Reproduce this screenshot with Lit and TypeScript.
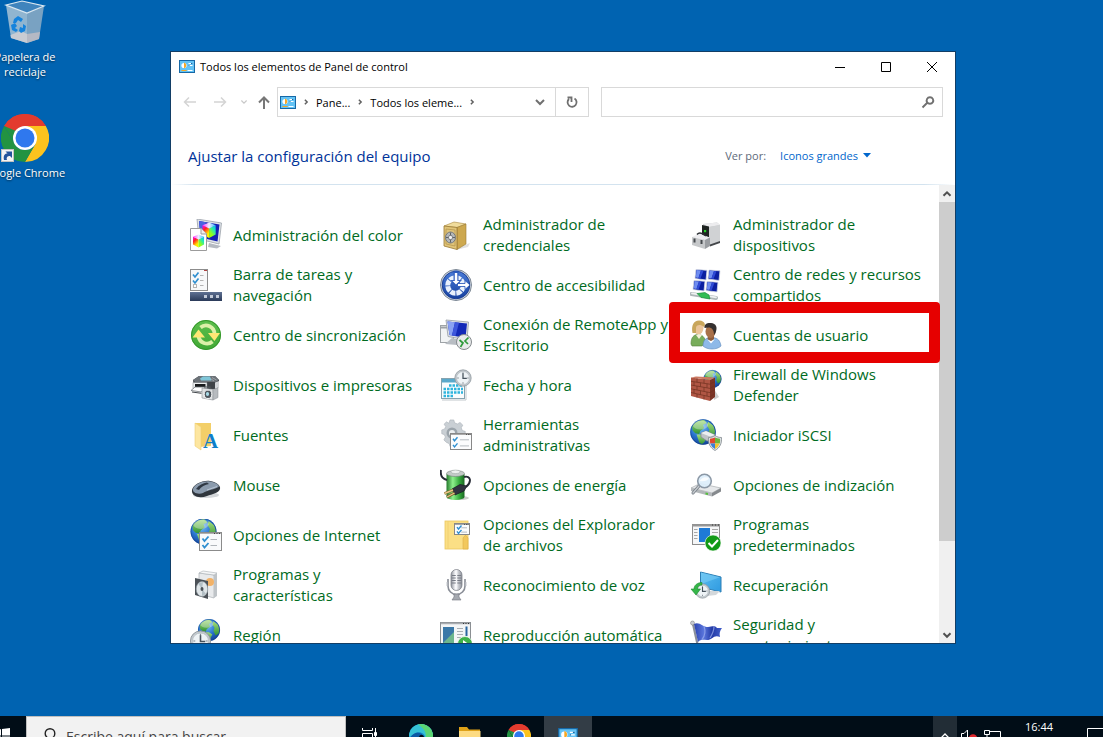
import { LitElement, html, svg, css, nothing } from "lit";
import { customElement, property } from "lit/decorators.js";

/* ---------- shared icon fragments ---------- */

const globe = (cx: number, cy: number, r: number) => svg`
  <g transform="translate(${cx} ${cy}) scale(${r / 10})">
    <circle r="10" fill="url(#sea)" />
    <path d="M-8.500-4C-7-8-2-9.600 1-9.300L3-7 0-5.500 1-3-2-1-3 1.500-6 1-8-1Z" fill="url(#land)" />
    <path d="M-5 2 0 2 3 4 1 8-1 9.500-3 8-4 5Z" fill="url(#land)" />
    <path d="M4-8 8-5 9.500-1 9 3 6 5 4 1 5-2 3-5Z" fill="url(#land)" />
    <ellipse cx="-2" cy="-5.500" rx="6" ry="3.500" fill="#fff" opacity=".32" />
    <circle r="9.700" fill="none" stroke="#0b3a85" stroke-width=".6" opacity=".6" />
  </g>`;

const clock = (cx: number, cy: number, r: number) => svg`
  <g transform="translate(${cx} ${cy}) scale(${r / 10})">
    <circle r="9.600" fill="#c3c9ce" stroke="#8d969c" stroke-width=".9" />
    <circle r="7.600" fill="#eef3f6" stroke="#aab2b8" stroke-width=".6" />
    <path d="M0-6.800V-5M0 5V6.800M-6.800 0H-5M5 0H6.800" stroke="#79838a" stroke-width="1.100" />
    <path d="M0-5.500V.5H4.500" fill="none" stroke="#46525c" stroke-width="1.500" />
  </g>`;

const checklist = (x: number, y: number, w: number, h: number) => svg`
  <g transform="translate(${x} ${y})">
    <rect x=".5" y=".5" width=${w - 1} height=${h - 1} fill="#fbfcfd" stroke="#888" />
    <path d="M1 1.500H${w - 1}" stroke="#a9a9a9" />
    <path d="M${w - 6} 1.500h1M${w - 4} 1.500h1M${w - 2.500} 1.500h1" stroke="#444" stroke-width=".8" />
    <path d="M3 ${h * 0.34}l1.500 2 3-3.500M3 ${h * 0.7}l1.500 2 3-3.500" fill="none" stroke="#2f8fd0" stroke-width="1.400" />
    <path d="M${w * 0.45} ${h * 0.4}H${w - 3}M${w * 0.45} ${h * 0.76}H${w - 3}" stroke="#b5bbc0" />
  </g>`;

const cube = (x: number, y: number, s: number) => svg`
  <g transform="translate(${x} ${y}) scale(${s})">
    <path d="M0 2.500 6 5V14L0 11Z" fill="url(#cubeL)" />
    <path d="M12 2.500 6 5V14L12 11Z" fill="url(#cubeR)" />
    <path d="M0 2.500 6 0 12 2.500 6 5.500Z" fill="url(#cubeT)" />
  </g>`;

const screenTile = (x: number, y: number) => svg`
  <g transform="translate(${x} ${y})">
    <path d="M1 0 12 .8 11 10.500 0 9Z" fill="#0b1fa0" stroke="#d5dbe6" stroke-width=".8" />
    <path d="M1.500.6 6 1 3.500 8.500.8 8Z" fill="#6f8df0" />
    <path d="M6 1 8.500 1.200 5.500 9 3.500 8.500Z" fill="#2e4ad6" />
  </g>`;

const chromeMark = svg`
  <path d="M24 24 3.200 12A24 24 0 0 1 44.800 12Z" fill="#e33b2e" />
  <path d="M24 12H44.800A24 24 0 0 1 24 48L34.400 30Z" fill="#fcc31e" />
  <path d="M3.200 12A24 24 0 0 1 44.800 12H24L13.600 18Z" fill="#e33b2e" />
  <path d="M3.200 12A24 24 0 0 0 24 48L34.400 30A12 12 0 0 1 13.600 30Z" fill="#229342" />
  <path d="M3.200 12 13.600 30 15 17Z" fill="#229342" />
  <circle cx="24" cy="24" r="12" fill="#fff" />
  <circle cx="24" cy="24" r="9.500" fill="#2f78ee" />`;

const panelMark = svg`
  <rect x=".5" y=".5" width="15" height="12" fill="#63c3f5" stroke="#1668a6" />
  <circle cx="5" cy="5.500" r="2.600" fill="#fff" />
  <path d="M5 5.500V2.500A3 3 0 0 1 5 8.300Z" fill="#f7a823" />
  <path d="M9.500 3.500h4M9.500 5.500h4" stroke="#fff" />
  <path d="M12 3.500h1.500M9.500 5.500h1" stroke="#1668a6" />
  <path d="M2.500 10.500h5" stroke="#f7a823" />
  <path d="M8.500 10.500h5" stroke="#fff" />`;

/* ---------- 32px icons ---------- */

const icons = {
  color: svg`
    <path d="M7 0 31.500 4 29 25 9 20Z" fill="#dfe3e8" stroke="#9aa1aa" stroke-width=".8" />
    <path d="M9 2 29.500 5.500 27.500 22.500 10.500 18.500Z" fill="#1522b4" />
    <path d="M9 2 16 3.200 12 18.800 10.500 18.500Z" fill="#4a62e0" />
    ${cube(12.500, 3.500, 1.100)}
    <path d="M19 24 25 25.500 31 27 27 29.500 18 28Z" fill="#b5bac1" />
    <path d="M.5 9.500H11L16.500 15V31.500H.5Z" fill="#fff" stroke="#9b9b9b" />
    <path d="M11 9.500V15H16.500" fill="#eee" stroke="#9b9b9b" />
    ${cube(3, 15.500, 0.920)}`,
  taskbar: svg`
    <rect x=".5" y=".5" width="17" height="21" fill="#f7f8f9" stroke="#8c8c8c" />
    <path d="M14 1.500h3" stroke="#b04545" />
    <path d="M3 5.500 5 8 8.500 3.500M3 11.500 5 14 8.500 9.500" fill="none" stroke="#2f8fd0" stroke-width="1.700" />
    <path d="M10 6.500h3.500M10 11.500h3.500M10 16.500h3.500" stroke="#b3b3b3" />
    <rect x="3.500" y="15.500" width="3" height="3" fill="#fff" stroke="#b3b3b3" />
    <rect y="23" width="32" height="9" fill="url(#bar)" />
    <path d="M14 27.500h3M20 27.500h3M26 27.500h3" stroke="#c2cad8" stroke-width="3" />`,
  sync: svg`
    <circle cx="16" cy="16" r="15" fill="url(#syncG)" />
    <circle cx="16" cy="16" r="14.500" fill="none" stroke="#35962b" />
    <path d="M8.500 17A8.500 8.500 0 0 0 22.500 22.500" fill="none" stroke="#dcf0a8" stroke-width="3.800" />
    <path d="M24.500 15A8.500 8.500 0 0 0 10.500 8.500" fill="none" stroke="#dcf0a8" stroke-width="3.800" />
    <path d="M2.500 18.500 8.500 10.500 15 18.500Z" fill="#ffe774" />
    <path d="M18 14 24.500 22 30 14Z" fill="#ffe774" />`,
  printer: svg`
    <path d="M3 11 9 7H25L29 11V18L25 20H4Z" fill="#3f4348" />
    <path d="M3 11 9 7H25L29 11 26 13H5Z" fill="#6c7278" />
    <path d="M10 9.500 13 7.500H20L21.500 11.500H11Z" fill="#7fc6d8" />
    <path d="M22 8.500 26.500 11M20.500 9.500 24 12" stroke="#a9afb4" stroke-width=".8" />
    <path d="M3 13.500H17V19.500H3Z" fill="#eceeef" stroke="#7a7e83" stroke-width=".5" />
    <path d="M5 15H15.500V18.500H5Z" fill="#17191b" />
    <path d="M25 13.500 29 12V18L25 20Z" fill="#d3d6d9" />
    <path d="M5 18H15L11.500 23 1 21.500Z" fill="#fff" stroke="#6d7277" stroke-width=".8" />
    <path d="M2 23 11.500 24.300" stroke="#42474b" />
    <path d="M12 19 23 20.500V31L12 29Z" fill="#dfe1e3" stroke="#888d92" stroke-width=".6" />
    <path d="M23 20.500 28 19V28.500L23 31Z" fill="#b7bbbf" stroke="#888d92" stroke-width=".5" />
    <ellipse cx="18" cy="25.300" rx="3.800" ry="4.200" fill="#4d555c" stroke="#f7f7f7" stroke-width="1" />
    <ellipse cx="17.500" cy="25" rx="1.600" ry="1.900" fill="#a9dbe8" />
    <path d="M14.500 18.200 20.500 19V17.500H15Z" fill="#555a5f" />`,
  fonts: svg`
    <path d="M5 4H21V27L9 28Z" fill="#f3cf68" />
    <path d="M5 4 11 8V31L5 27Z" fill="#fde6a0" stroke="#efcf73" stroke-width=".6" />
    <text x="13" y="29" font-family="Liberation Serif, serif" font-weight="700" font-size="21" fill="#0f7fc8">A</text>`,
  mouse: svg`
    <ellipse cx="16" cy="26" rx="13" ry="3" fill="#aab0b6" opacity=".5" />
    <path d="M2 21C3 16 12 11 20 12 27 13 31 17 30 20 29 24 22 25 17 27 9 30 1 27 2 21Z" fill="#30363d" />
    <path d="M3 20C5 15 13 11.500 20 12.500 26 13.500 30 16 28.500 18 25 20.500 17 21 13 24 8 26 2 23.500 3 20Z" fill="#8b9bad" />
    <path d="M6 20C9 16 13 14 17 13.500L19 15C15 15.500 11 18 9 21Z" fill="#2f3843" />
    <path d="M17 21 27 17.500" stroke="#c5d1de" stroke-width=".8" />`,
  internet: svg`${globe(13.500, 12.500, 13)}
    <rect x="9.500" y="13.500" width="22" height="18" fill="#f9fafb" stroke="#8b8b8b" />
    <path d="M10 14.500h21" stroke="#b0b0b0" /><path d="M24 14.500h1M26.500 14.500h1M29 14.500h1" stroke="#444" />
    <path d="M12.500 19.500 14.500 22 18.500 17.500M12.500 26 14.500 28.500 18.500 24" fill="none" stroke="#2f8fd0" stroke-width="1.800" />
    <path d="M20.500 20.500H27M20.500 26.500H27" stroke="#b0b5ba" stroke-width="1.200" />`,
  programs: svg`
    <path d="M9 4 24 6V29L9 25Z" fill="#e8eaec" stroke="#aab0b5" stroke-width=".7" />
    <path d="M24 6 27 4V27L24 29Z" fill="#bfc4c8" />
    <path d="M9 4 13 2 27 4 24 6Z" fill="#f6f7f8" stroke="#aab0b5" stroke-width=".6" />
    <circle cx="20" cy="13" r="4" fill="#f2b268" />
    <path d="M5 9 18 12V30L5 26Z" fill="#4b5157" />
    <ellipse cx="12" cy="20" rx="5.800" ry="7.400" fill="#dfe5e8" stroke="#8f999f" stroke-width=".6" />
    <path d="M12 20 8 14.500 13 13ZM12 20 16 25 12 27Z" fill="#b3bfc5" />
    <ellipse cx="12" cy="20" rx="1.500" ry="1.900" fill="#4b5157" />`,
  region: svg`${globe(19, 11, 11)}${clock(10.500, 22, 10.500)}`,
  credentials: svg`
    <path d="M22 27 30 24 28 28 16 31Z" fill="#ccc" opacity=".6" />
    <path d="M4 7 14 3 26 5 17 8.500Z" fill="#f0dc9c" stroke="#a8873c" stroke-width=".6" />
    <path d="M17 8.500 26 5V25L17 30.500Z" fill="#cda84f" stroke="#9a7a34" stroke-width=".6" />
    <path d="M4 7 17 8.500V30.500L4 27Z" fill="#e0c478" stroke="#9a7a34" stroke-width=".8" />
    <path d="M6 10 15 11V27L6 25Z" fill="none" stroke="#b79850" stroke-width=".8" />
    <ellipse cx="10.500" cy="18.500" rx="5" ry="5.500" fill="#b4b7b9" stroke="#74787b" />
    <ellipse cx="10.500" cy="18.500" rx="2" ry="2.300" fill="#f2f2f2" stroke="#6c7073" stroke-width=".8" />
    <path d="M10.500 13.500v3M10.500 20.500v3M6 18.500h2.500M12.500 18.500h2.500" stroke="#5f6366" />`,
  access: svg`
    <circle cx="16" cy="16" r="15.500" fill="#d4dae2" stroke="#7c8794" />
    <circle cx="16" cy="16" r="13.800" fill="url(#accG)" stroke="#1b3f94" />
    <circle cx="15.500" cy="16.500" r="7.800" fill="none" stroke="#e9f1fc" stroke-width="5" stroke-dasharray="5.200 .9" />
    <path d="M13.500 1.500H18.500V11H22L16 17 10 11H13.500Z" fill="#2a58ba" opacity=".9" />
    <path d="M14.800 4H17.300V12H19.500L16 15.500 12.500 12H14.800Z" fill="#fff" />
    <path d="M17.500 14.500H25V11.500L30 16 25 20.500V17.500H17.500Z" fill="#fff" stroke="#1f4fb4" stroke-width=".8" />`,
  remote: svg`
    <rect x=".5" y="6.500" width="13" height="17" fill="#f1f3f4" stroke="#9ea3a7" /><path d="M1 8.500h12" stroke="#9ea3a7" stroke-width="2" />
    <path d="M6 1 28.500 3 27 21 8 17.500Z" fill="#dde1e6" stroke="#979da5" stroke-width=".8" />
    <path d="M7.500 2.500 27 4.500 25.500 19 9.500 16Z" fill="#1329b8" />
    <path d="M7.500 2.500 15 3.300 12 16.500 9.500 16Z" fill="#8aa2f3" /><path d="M15 3.300 19 3.700 15.500 17 12 16.500Z" fill="#3e57dc" />
    <path d="M12 19 20 21 17 26 5 25Z" fill="#b8bdc3" />
    <circle cx="24" cy="23" r="7.500" fill="#e8eaeb" stroke="#84898d" />
    <path d="M19.500 21 23 24 20.500 28M28.500 18.500 25 22 28 25" fill="none" stroke="#2f9a3b" stroke-width="1.700" />`,
  date: svg`
    <rect x="1.500" y="9.500" width="23" height="20" fill="#fafcfd" stroke="#86a3b0" /><path d="M2 31h24V12" fill="none" stroke="#c2c8cc" />
    <rect x="2" y="10" width="22" height="3.500" fill="#5aa9cb" />
    <path d="M9 16.500H23M3.500 20H23M3.500 23.500H23M3.500 27H14" stroke="#2fb4dd" stroke-width="2.400" stroke-dasharray="2.500 1" />
    ${clock(23, 9, 8.500)}`,
  admin: svg`
    <path d="M9.500 1h4l.8 3 3 1.200L20 3.600 23 6.500 21.300 9.200l1.200 3 3 .8v4l-3 .8-1.200 3L23 23.500 20 26.400l-2.700-1.600-3 1.200-.8 3h-4l-.8-3L5.500 24.500 3 22l1.600-3L3.500 16.500.8 15.500V11.500L3.800 10.500 5 8 3.200 5.500 5.800 3 8.300 4.500Z" transform="translate(1 0) scale(.95)" fill="#c9cfd4" stroke="#a8b0b6" stroke-width=".6" />
    <circle cx="12" cy="14" r="5.500" fill="#9ba4ab" /><circle cx="12" cy="14" r="3" fill="#eceff1" />
    ${checklist(10, 14, 22, 17)}`,
  power: svg`
    <ellipse cx="19" cy="29" rx="10" ry="2" fill="#999" opacity=".5" />
    <path d="M6.500 5V28A9 3 0 0 0 24.500 28V5Z" fill="url(#batt)" />
    <ellipse cx="15.500" cy="4.500" rx="9" ry="3" fill="#c3cac7" stroke="#74807a" stroke-width=".6" /><ellipse cx="15.500" cy="2.800" rx="4.500" ry="1.800" fill="#eef1ef" stroke="#9aa39e" stroke-width=".5" />
    <path d="M1 1C0 7 3 10 7 11M24 8C31 6 32 13 26 18" fill="none" stroke="#262a35" stroke-width="1.900" />
    <path d="M12 20 20 15.500 27 17 24 22 15 26Z" fill="#30323f" stroke="#171923" stroke-width=".7" />
    <path d="M13 21 4.500 24.500M14.500 24 7 28" stroke="#7a5d2c" stroke-width="2.600" /><path d="M13 21 4.500 24.500M14.500 24 7 28" stroke="#e6c987" stroke-width="1.400" />`,
  explorer: svg`
    <rect x="5" y="2" width="23" height="28" fill="#fbdf85" stroke="#ecc65e" stroke-width=".8" /><path d="M8 2V30" stroke="#f1d072" />
    <path d="M23 30V19L25.500 16 28 19V30Z" fill="#f2c85d" stroke="#ddb048" stroke-width=".6" />
    ${checklist(14, 4, 16, 12)}`,
  mic: svg`
    <rect x="11" y=".5" width="11" height="21" rx="5.500" fill="url(#silver)" stroke="#73777f" stroke-width=".7" />
    <path d="M12 6.500h9M11.500 9h10M11.500 11.500h10M11.500 14h10" stroke="#787c86" stroke-width="1" />
    <path d="M16.500 1V20" stroke="#f5f6f8" stroke-width="1.500" />
    <path d="M8 10V17A8.500 8.500 0 0 0 25 17V10" fill="none" stroke="#8a8e97" stroke-width="1.600" />
    <path d="M7 13V17M26 13V17" stroke="#c3c6cc" />
    <path d="M14 25H19V28L21 31H12L14 28Z" fill="#a5a9b0" stroke="#73777f" stroke-width=".6" />`,
  autoplay: svg`
    <rect x=".5" y="3.500" width="30" height="24" fill="#f3f5f6" stroke="#8b8f93" /><path d="M1 4.500h29" stroke="#a8acb0" stroke-width="1.500" />
    <path d="M23 4.500h1M25.500 4.500h1M28 4.500h1" stroke="#333" />
    <rect x="3" y="8" width="11" height="17" fill="#3a78a8" /><path d="M3 24 14 13V25H3Z" fill="#6db68d" />
    <path d="M17 9.500h6M17 12.500h6M17 15.500h6M17 18.500h4" stroke="#a9aeb2" /><path d="M26.500 7.500V17" stroke="#2a67a0" stroke-width="2" />
    <circle cx="25" cy="25" r="7.500" fill="#3fb24a" stroke="#f0f7ee" stroke-width=".8" /><path d="M23 21 28.500 25 23 29Z" fill="#fff" />`,
  devices: svg`
    <path d="M13 5 27 3.500 30 6V22L19 27 13 21Z" fill="#c7c9cc" /><path d="M13 5 27 3.500 30 6 19 8Z" fill="#ececee" />
    <path d="M19 8 30 6V22L19 26Z" fill="#d0d2d4" /><path d="M12 6 19 7.500V19L12 17Z" fill="#1f2421" /><rect x="14" y="11" width="2.200" height="2.200" fill="#26d02a" />
    <path d="M20 25.500 30 22V24L20 27.500Z" fill="#43464a" />
    <path d="M2 18 9 14.500 20 18.500 15 21Z" fill="#ededf0" /><path d="M2 18 15 21V30L2 26Z" fill="#c6c8ca" /><path d="M15 21 20 18.500V27L15 30Z" fill="#9a9da1" />
    <path d="M7 15.500Q10 12 16 17" fill="none" stroke="#2c2f33" stroke-width="1.500" />
    <path d="M4.500 19.500v4M11.500 21v4" stroke="#45494d" stroke-width="2" />`,
  network: svg`
    ${screenTile(5, 0.500)}${screenTile(18, 1)}${screenTile(3, 11.500)}${screenTile(16, 12.500)}
    <path d="M1.500 25 26 29" stroke="#aeb6b8" stroke-width="4" stroke-linecap="round" /><path d="M2 24.300 26 28.300" stroke="#eef1f1" stroke-width="1.800" stroke-linecap="round" />
    <path d="M7 24.500 15 23.500 19 26 20 30 11 28.500Z" fill="#31bd54" stroke="#148735" stroke-width=".6" />`,
  users: svg`
    <path d="M1 25C1 18 4 15.500 8 15.500S15 18 16 24L12 27H2Z" fill="#78ad5b" stroke="#557f3e" stroke-width=".6" />
    <ellipse cx="8.500" cy="9" rx="5" ry="6.500" fill="#eac49a" />
    <path d="M2.500 14C1 6 4 1 9.500 1.500 15 2 16 6 14 8 10 4.500 6 6 6 9V14Z" fill="#c9a65c" /><path d="M6 16 9 20 12 16 9 15Z" fill="#f4f0d8" />
    <path d="M13 27C13 21 16 18.500 21 18.500S30 20 31 27C27 31 17 31 13 27Z" fill="#8eb9e8" stroke="#5b86bb" stroke-width=".6" />
    <path d="M18 17H24V20L21 23 17.500 20Z" fill="#8e5d3c" /><ellipse cx="20.500" cy="12.500" rx="5" ry="6.500" fill="#a87049" />
    <path d="M14.500 9C14 4.500 18 3.500 21 4 26 4.500 28 8 25.500 14L24 16C24 11 22 8.500 18.500 8.500Z" fill="#35302f" /><path d="M17.500 20.500 21 24.500 25 20 21 22Z" fill="#fff" />`,
  firewall: svg`${globe(22.500, 10, 9)}
    <path d="M24 20 29 28 24 31Z" fill="#aaa" opacity=".6" />
    <path d="M1 8.500 20 11V32L1 27Z" fill="#b05644" /><path d="M20 11 25 8.500V28L20 32Z" fill="#7b3426" /><path d="M1 8.500 6 7.500 25 8.500 20 11Z" fill="#cb7a63" />
    <path d="M1 12.300 20 15.200M1 16 20 19.400M1 19.800 20 23.600M1 23.500 20 27.800M7 9.300v3.900M14 10.200v4.100M4 12.800v3.900M10.500 13.700v4M17 14.700v4M7 17v3.800M14 18.300v4M4 20.300v4M10.500 21.700v4M17 23v4M7 25v3.600M14 26.500v4M20 15.200 25 12.500M20 19.400 25 16.500M20 23.600 25 20.500M20 27.800 25 24.500" fill="none" stroke="#70301f" stroke-width=".7" />`,
  iscsi: svg`${globe(13, 13, 12.800)}
    <path d="M11 14 16 12 25 16 24 21 17 22 11 18Z" fill="#c0c4c8" stroke="#82888d" stroke-width=".7" /><path d="M11 14 16 12 25 16 20 17.500Z" fill="#eef0f1" />
    <path d="M25 16.500C27 18 29 18.500 31.500 18.500 32 25 29.500 29 25 31.500 20.500 29 18 25 18.500 18.500 21 18.500 23 18 25 16.500Z" fill="#dfe3e6" stroke="#80888e" stroke-width=".8" />
    <path d="M25 18.500V24.500H20.200A12 12 0 0 1 20 19.800Q23 19.500 25 18.500Z" fill="#e0492f" /><path d="M25 18.500V24.500H29.800A12 12 0 0 0 30 19.800Q27 19.500 25 18.500Z" fill="#6eb53f" />
    <path d="M25 24.500V30Q21.500 28 20.200 24.500Z" fill="#3b7fd6" /><path d="M25 24.500V30Q28.500 28 29.800 24.500Z" fill="#f2c52e" />`,
  indexing: svg`
    <path d="M1 19 10 14.500 31 19 22 24Z" fill="#e6e8ea" stroke="#9ca1a5" stroke-width=".6" /><path d="M1 19 22 24V27.500L1 22Z" fill="#b3b7ba" /><path d="M22 24 31 19V22.500L22 27.500Z" fill="#85898d" /><path d="M15.500 23.500 18 24.100V26L15.500 25.500Z" fill="#55c03d" />
    <path d="M9 17 3 24" stroke="#777e86" stroke-width="3" stroke-linecap="round" /><path d="M9 17 3 24" stroke="#c4c9ce" stroke-width="1.400" stroke-linecap="round" />
    <circle cx="14.500" cy="12" r="6.800" fill="#dceefb" fill-opacity=".92" stroke="#8b98a6" stroke-width="1.600" /><path d="M9.500 12Q13 6.500 19 9 17 13 9.500 12Z" fill="#fff" opacity=".8" />`,
  defaults: svg`
    <rect x="2.500" y="5.500" width="27" height="20" fill="#f5f6f7" stroke="#8d8d8d" /><path d="M2 6.500h28" stroke="#969696" stroke-width="2" /><path d="M22 6h1M25 6h1M28 6h1" stroke="#333" />
    <rect x="9" y="9" width="11" height="14" fill="#1e7ad6" /><path d="M4 10.500h3.500M4 13.500h3.500M4 16.500h3.500M4 19.500h3.500M22 10.500h6M22 13.500h6" stroke="#a7a7a7" />
    <circle cx="23" cy="24" r="8" fill="#129a16" stroke="#fff" stroke-width=".6" /><path d="M18.500 24 22 27.500 28 21" fill="none" stroke="#fff" stroke-width="2" />`,
  recovery: svg`
    <path d="M10.500 3 31 8V23L10.500 18Z" fill="url(#sky)" stroke="#2d7fb5" /><path d="M11 3.500 30 8.200 11 15Z" fill="#7ccdf5" opacity=".6" />
    <path d="M18 22 30 22 26 26 17 27Z" fill="#d4d8db" />
    ${clock(12.500, 22, 7.500)}
    <path d="M12 13.500C7 13.500 4 16.500 4 20H1L6 26 10.500 20H7.500C7.500 17.500 9 16 12 16Z" fill="#35b648" stroke="#1e8c32" stroke-width=".6" />`,
  security: svg`
    <path d="M3 5 9 32" stroke="#8a8f9a" stroke-width="2.200" /><circle cx="2.500" cy="4" r="2" fill="#c9ccd4" stroke="#777" stroke-width=".5" />
    <path d="M4 5C9 2 13 8 18 8 22 8 24 6 27 9L32 9C30 12 29 14 30 18 24 15 22 21 17 21 13 21 11 20 8 23Z" fill="url(#flag)" /><path d="M14 7C16 13 15 17 12 20.500M24 7.500C24 12 23 14 20 19" fill="none" stroke="#9eb0f0" stroke-width="1.200" opacity=".7" />`,
};

type IconName = keyof typeof icons;

interface Entry {
  icon: IconName;
  label: string;
  marked?: boolean;
}

const entries: Entry[] = [
  { icon: "color", label: "Administración del color" },
  { icon: "credentials", label: "Administrador de credenciales" },
  { icon: "devices", label: "Administrador de dispositivos" },
  { icon: "taskbar", label: "Barra de tareas y navegación" },
  { icon: "access", label: "Centro de accesibilidad" },
  { icon: "network", label: "Centro de redes y recursos compartidos" },
  { icon: "sync", label: "Centro de sincronización" },
  { icon: "remote", label: "Conexión de RemoteApp y Escritorio" },
  { icon: "users", label: "Cuentas de usuario", marked: true },
  { icon: "printer", label: "Dispositivos e impresoras" },
  { icon: "date", label: "Fecha y hora" },
  { icon: "firewall", label: "Firewall de Windows Defender" },
  { icon: "fonts", label: "Fuentes" },
  { icon: "admin", label: "Herramientas administrativas" },
  { icon: "iscsi", label: "Iniciador iSCSI" },
  { icon: "mouse", label: "Mouse" },
  { icon: "power", label: "Opciones de energía" },
  { icon: "indexing", label: "Opciones de indización" },
  { icon: "internet", label: "Opciones de Internet" },
  { icon: "explorer", label: "Opciones del Explorador de archivos" },
  { icon: "defaults", label: "Programas predeterminados" },
  { icon: "programs", label: "Programas y características" },
  { icon: "mic", label: "Reconocimiento de voz" },
  { icon: "recovery", label: "Recuperación" },
  { icon: "region", label: "Región" },
  { icon: "autoplay", label: "Reproducción automática" },
  { icon: "security", label: "Seguridad y mantenimiento" },
];

const reset = css`
  * { box-sizing: border-box; }
  ul { list-style: none; margin: 0; padding: 0; }
  button, input, select { font: inherit; color: inherit; border: 0; padding: 0; margin: 0; background: none; border-radius: 0; outline-offset: -2px; }
  a { color: inherit; text-decoration: none; }
  svg { display: block; flex: none; }
  button { display: flex; align-items: center; justify-content: center; }
`;

@customElement("control-panel-window")
export class ControlPanelWindow extends LitElement {
  @property({ attribute: false }) items: Entry[] = [];

  static styles = [reset, css`
    :host { display: flex; flex-direction: column; background: #fff; border: 1px solid #123e66; color: #000; font-size: 11px; min-width: 0; overflow: hidden; }
    .defs { position: absolute; width: 0; height: 0; }
    .titlebar { display: flex; align-items: center; height: 29px; padding-left: 8px; gap: 5px; }
    .title { flex: 1; margin: 0; font-size: 11px; font-weight: 400; white-space: nowrap; }
    .captions { display: flex; }
    .caption { width: 46px; height: 29px; }
    .toolbar { display: flex; align-items: center; height: 42px; padding: 0 12px 0 8px; }
    .nav { display: flex; align-items: center; flex: none; width: 98px; }
    .navbtn { width: 22px; height: 28px; margin-right: 8px; }
    .navbtn.recent { width: 10px; margin-right: 6px; }
    .navbtn.up { width: 18px; margin: 0; }
    .address { display: flex; flex: 312 1 0; height: 30px; border: 1px solid #d9d9d9; min-width: 0; }
    .crumbs { display: flex; align-items: center; flex: 1; gap: 4px; padding-left: 2px; min-width: 0; white-space: nowrap; }
    .drop { width: 30px; }
    .refresh { width: 33px; border-left: 1px solid #d9d9d9; }
    .search { display: flex; align-items: center; flex: 342 1 0; height: 30px; margin-left: 12px; border: 1px solid #d9d9d9; min-width: 0; }
    .search input { flex: 1; min-width: 0; height: 28px; padding-left: 8px; }
    .search button { width: 28px; height: 28px; }
    .heading { display: flex; align-items: center; justify-content: space-between; height: 61px; padding: 4px 84px 0 17px; }
    .heading h2 { margin: 0; font-size: var(--text-l); font-weight: 400; color: #039; }
    .view { display: flex; align-items: center; gap: 14px; color: #5e6a7a; }
    .pick { display: grid; align-items: center; color: #06c; }
    .pick select { grid-area: 1 / 1; appearance: none; field-sizing: content; padding-right: 13px; }
    .pick svg { grid-area: 1 / 1; justify-self: end; pointer-events: none; }
    .rule { height: 1px; background: linear-gradient(90deg, #fff, #d3e3ef 3%, #d3e3ef 96%, #fff); }
    .body { flex: 1; min-height: 0; display: grid; grid-template-columns: minmax(0, 1fr) 16px; grid-template-rows: minmax(0, 1fr); overflow: hidden; }
    .list { display: grid; grid-template-columns: repeat(auto-fill, 250px); grid-auto-rows: 50px; padding: 25px 0 0 18px; }
    .entry { position: relative; }
    .entry a { display: flex; align-items: center; height: 50px; gap: 11px; padding: 0 17px 0 1px; color: #006b1e; font-size: var(--text-l); line-height: 21px; }
    .entry a:hover { text-decoration: underline; }
    .mark { position: absolute; z-index: 1; inset: -8px -1px -3px -20px; border: 11px solid #e60000; border-radius: 4px; pointer-events: none; }
    .scroll { display: flex; flex-direction: column; background: #f0f0f0; }
    .scroll button { height: 17px; }
    .track { flex: 1; }
    .thumb { height: 80%; background: #cdcdcd; }
  `];

  private glyph(d: string, color: string, size = 16, width = 1.5) {
    return html`<svg width=${size} height=${size} viewBox="0 0 16 16" fill="none" stroke=${color} stroke-width=${width} aria-hidden="true">
      <path d=${d} /></svg>`;
  }

  private panelIcon() {
    return html`<svg width="16" height="13" viewBox="0 0 16 13" aria-hidden="true">${panelMark}</svg>`;
  }

  render() {
    const crumb = this.glyph("M6.500 5 9.500 8 6.500 11", "#606060", 12, 2);
    return html`
      <svg class="defs" aria-hidden="true">
        <defs>
          <radialGradient id="sea" cx=".4" cy=".3" r=".8"><stop offset="0" stop-color="#7cc4f6" /><stop offset=".5" stop-color="#2a74cf" /><stop offset="1" stop-color="#0d3486" /></radialGradient>
          <linearGradient id="land" x1="0" y1="0" x2="0" y2="1"><stop offset="0" stop-color="#a5dc7c" /><stop offset="1" stop-color="#2f9335" /></linearGradient>
          <linearGradient id="cubeL" x1="0" y1="0" x2=".5" y2="1"><stop offset="0" stop-color="#f0f" /><stop offset=".4" stop-color="#f22" /><stop offset=".85" stop-color="#fe0" /></linearGradient>
          <linearGradient id="cubeR" x1="1" y1="0" x2=".3" y2="1"><stop offset="0" stop-color="#1af" /><stop offset=".35" stop-color="#1eeab8" /><stop offset=".8" stop-color="#9f1" /></linearGradient>
          <linearGradient id="cubeT"><stop offset="0" stop-color="#f3f" /><stop offset=".5" stop-color="#eef" /><stop offset="1" stop-color="#3bf" /></linearGradient>
          <linearGradient id="bar" x1="0" y1="0" x2="0" y2="1"><stop offset="0" stop-color="#5f7193" /><stop offset="1" stop-color="#2a3a58" /></linearGradient>
          <linearGradient id="syncG" x1="0" y1="0" x2="0" y2="1"><stop offset="0" stop-color="#5cbf4c" /><stop offset="1" stop-color="#41a835" /></linearGradient>
          <linearGradient id="accG" x1="0" y1="0" x2="0" y2="1"><stop offset="0" stop-color="#4a7cd8" /><stop offset="1" stop-color="#15409f" /></linearGradient>
          <linearGradient id="batt"><stop offset="0" stop-color="#237a2b" /><stop offset=".35" stop-color="#8ef08c" /><stop offset=".7" stop-color="#37ad3f" /><stop offset="1" stop-color="#1a6622" /></linearGradient>
          <linearGradient id="silver"><stop offset="0" stop-color="#8f939c" /><stop offset=".4" stop-color="#fafafc" /><stop offset="1" stop-color="#8f939c" /></linearGradient>
          <linearGradient id="sky" x1="0" y1="0" x2="1" y2="1"><stop offset="0" stop-color="#5bbdf0" /><stop offset="1" stop-color="#2f9ae0" /></linearGradient>
          <linearGradient id="flag"><stop offset="0" stop-color="#2c43b0" /><stop offset=".35" stop-color="#5a76dc" /><stop offset=".65" stop-color="#233aa6" /><stop offset="1" stop-color="#4460cc" /></linearGradient>
        </defs>
      </svg>

      <header class="titlebar">
        ${this.panelIcon()}
        <h1 class="title">Todos los elementos de Panel de control</h1>
        <div class="captions">
          <button class="caption" aria-label="Minimizar">${this.glyph("M3 8.500H13", "#000", 16, 1)}</button>
          <button class="caption" aria-label="Maximizar">${this.glyph("M3.500 3.500H12.500V12.500H3.500Z", "#000", 16, 1)}</button>
          <button class="caption" aria-label="Cerrar">${this.glyph("M3 3 13 13M13 3 3 13", "#000", 16, 1)}</button>
        </div>
      </header>

      <nav class="toolbar" aria-label="Navegación">
        <div class="nav">
          <button class="navbtn" aria-label="Atrás" disabled>${this.glyph("M14 8H2.500M7 3.500 2.500 8 7 12.500", "#d4d4d4")}</button>
          <button class="navbtn" aria-label="Adelante" disabled>${this.glyph("M2 8H13.500M9 3.500 13.500 8 9 12.500", "#d4d4d4")}</button>
          <button class="navbtn recent" aria-label="Ubicaciones recientes">${this.glyph("M4.500 6 8 9.500 11.500 6", "#c8c8c8", 12)}</button>
          <button class="navbtn up" aria-label="Arriba">${this.glyph("M8 15V3.500M3 8.500 8 3.500 13 8.500", "#777", 16, 2)}</button>
        </div>
        <div class="address">
          <div class="crumbs">
            ${this.panelIcon()}${crumb}<a href="#">Pane...</a>${crumb}<a href="#">Todos los eleme...</a>${crumb}
          </div>
          <button class="drop" aria-label="Ubicaciones anteriores">${this.glyph("M4 6 8 10 12 6", "#707070", 16, 2)}</button>
          <button class="refresh" aria-label="Actualizar">${this.glyph("M10.500 4.500A4.500 4.500 0 1 1 5 5M3.500 3.500H7.500V8", "#707070", 16, 1.8)}</button>
        </div>
        <div class="search">
          <input type="search" aria-label="Buscar en el Panel de control" />
          <button aria-label="Buscar">${this.glyph("M2.500 13.500 7 9M10 3.200A3.300 3.300 0 1 1 9.900 3.200Z", "#707070", 16, 1.9)}</button>
        </div>
      </nav>

      <div class="heading">
        <h2>Ajustar la configuración del equipo</h2>
        <div class="view">
          <label for="view">Ver por:</label>
          <div class="pick">
            <select id="view"><option>Iconos grandes</option></select>
            <svg width="8" height="5" viewBox="0 0 8 5" aria-hidden="true"><path d="M0 0H8L4 4.500Z" fill="#06c" /></svg>
          </div>
        </div>
      </div>
      <div class="rule"></div>

      <div class="body">
        <ul class="list">
          ${this.items.map((e) => html`
            <li class="entry">
              <a href="#"><svg width="32" height="32" viewBox="0 0 32 32" aria-hidden="true">${icons[e.icon]}</svg><span>${e.label}</span></a>
              ${e.marked ? html`<div class="mark"></div>` : nothing}
            </li>`)}
        </ul>
        <div class="scroll">
          <button aria-label="Desplazar hacia arriba">${this.glyph("M4.500 9.800 8 6.300 11.500 9.800", "#505050", 16, 2)}</button>
          <div class="track"><div class="thumb"></div></div>
          <button aria-label="Desplazar hacia abajo">${this.glyph("M4.500 6.300 8 9.800 11.500 6.300", "#505050", 16, 2)}</button>
        </div>
      </div>`;
  }
}

@customElement("task-bar")
export class TaskBar extends LitElement {
  static styles = [reset, css`
    :host { display: flex; height: 40px; background: #010d17; color: #fff; font-size: 11px; }
    button { width: 48px; height: 40px; flex: none; }
    .start { margin-left: -22px; }
    .search { display: flex; align-items: center; gap: 8px; flex: 0 1 320px; padding-left: 15px; background: #f2f2f2; border: 1px solid #bfbfbf; color: #222; }
    .search input { flex: 1; min-width: 0; font-size: 14px; }
    .search input::placeholder { color: #444; opacity: 1; }
    .apps { display: flex; gap: 1px; flex: 1; }
    .apps .views { margin-right: 2px; }
    .active { background: #333d46; }
    .tray { display: flex; }
    .tray button { width: 24px; }
    .tray .more { background: #222d36; }
    .tray .clock { width: 68px; align-items: flex-start; padding-top: 3px; }
    .tray .notice { width: 48px; margin-right: -18px; }
  `];

  render() {
    return html`
      <button class="start" aria-label="Inicio"><svg width="16" height="16" viewBox="0 0 16 16"><path d="M0 2.200 7 1.200V7.500H0ZM8 1 16 0V7.500H8ZM0 8.500H7V14.800L0 13.800ZM8 8.500H16V16L8 15Z" fill="#fff" /></svg></button>
      <label class="search">
        <svg width="16" height="18" viewBox="0 0 16 18" fill="none" stroke="#222" stroke-width="1.400"><circle cx="8" cy="6.500" r="4.800" /><path d="M5 10.500 1 17" /></svg>
        <input type="text" placeholder="Escribe aquí para buscar" aria-label="Buscar" />
      </label>
      <div class="apps">
        <button class="views" aria-label="Vista de tareas"><svg width="16" height="16" viewBox="0 0 16 16" fill="none" stroke="#fff"><path d="M.5 0V2.500H10.500V0M.5 5.500H10.500V10.500H.5ZM.5 16V13.500H10.500V16M13.500 0V16" /><path d="M12.500 4.500h2v3h-2Z" fill="#fff" /></svg></button>
        <button aria-label="Microsoft Edge"><svg width="24" height="24" viewBox="0 0 24 24">
          <circle cx="12" cy="12" r="12" fill="#1386c9" /><path d="M0 12A12 12 0 0 1 24 12C24 16 20 18 16 16 18 9 9 6 5 10 2 12 1 14 0 12Z" fill="#35c1d6" /><path d="M12 0A12 12 0 0 1 24 12C24 17 18 17 15.500 15 19 10 15 4 9 .5Z" fill="#5bd573" /><path d="M1 15C2 8 13 6 14 13 9 13 9 19 14 24 6 24 1 20 1 15Z" fill="#0c59a4" /><path d="M10 14C10 9 16 10 15 15Z" fill="#010d17" />
        </svg></button>
        <button aria-label="Explorador de archivos"><svg width="22" height="18" viewBox="0 0 22 18"><path d="M0 0H8L10 2.500H21V18H0Z" fill="#dfa218" /><path d="M0 4H21.500V18H0Z" fill="#fddb82" /><path d="M4 13H18V18H4Z" fill="#3f97d8" /></svg></button>
        <button aria-label="Google Chrome"><svg width="24" height="24" viewBox="0 0 48 48">${chromeMark}</svg></button>
        <button class="active" aria-label="Panel de control"><svg width="20" height="16" viewBox="0 0 16 13">${panelMark}</svg></button>
      </div>
      <div class="tray">
        <button class="more" aria-label="Mostrar iconos ocultos"><svg width="12" height="8" viewBox="0 0 12 8" fill="none" stroke="#fff" stroke-width="1.300"><path d="M1.500 6.500 6 2 10.500 6.500" /></svg></button>
        <button aria-label="Volumen"><svg width="16" height="14" viewBox="0 0 16 14"><path d="M.5 4.500H3L6.500 1V13L3 9.500H.5Z" fill="none" stroke="#fff" /><circle cx="12" cy="9.500" r="4.300" fill="#e0262c" /></svg></button>
        <button aria-label="Red"><svg width="18" height="14" viewBox="0 0 18 14" fill="none" stroke="#fff"><path d="M5 2.500H16.500V10.500H4M.5 1.500H5.500V5.500H.5ZM3 5.500V12.500H12" /></svg></button>
        <button class="clock">16:44</button>
        <button class="notice" aria-label="Notificaciones"><svg width="20" height="18" viewBox="0 0 20 18" fill="none" stroke="#fff"><path d="M.5 1.500H18.500V13.500H13L10 16.500V13.500H.5Z" /></svg></button>
      </div>`;
  }
}

@customElement("app-root")
export class AppRoot extends LitElement {
  static styles = [reset, css`
    :host {
      --text-l: 15px;
      display: grid;
      grid-template-rows: minmax(0, 1fr) 21px;
      height: 100vh;
      overflow: hidden;
      background: #0063b1;
      font-family: "Open Sans", "Noto Sans", sans-serif;
    }
    .desktop { position: relative; min-width: 0; }
    .shortcuts { position: absolute; left: -25px; top: -2px; width: 100px; display: grid; grid-auto-rows: 116px; }
    .shortcuts a { display: flex; flex-direction: column; align-items: center; gap: 3px; color: #fff; font-size: 11px; line-height: 15px; text-align: center; text-shadow: 0 1px 2px #0009; }
    .shortcuts span { max-width: 90px; }
    .shortcuts .narrow { max-width: 70px; }
    control-panel-window { position: absolute; inset: 51px 147px 72px 170px; }
  `];

  render() {
    return html`
      <main class="desktop">
        <ul class="shortcuts">
          <li><a href="#">
            <svg width="48" height="48" viewBox="0 0 48 48" aria-hidden="true">
              <path d="M5 7 26 15V45L10 40Z" fill="#a9c3d6" fill-opacity=".85" /><path d="M43 8 26 15V45L38 41Z" fill="#86a9c4" fill-opacity=".9" />
              <path d="M5 7 21 3 43 8 26 15Z" fill="#3f84bd" stroke="#dbe8f1" stroke-width="1.200" />
              <path d="M9.500 37 20 33 26 36V45L10 40Z" fill="#c8ccd3" /><path d="M26 36 39 34 38 41 26 45Z" fill="#b5b9c4" />
              <path d="M13 21 17 18 22 21 20 24 17 22 15 25 12 25ZM10 27 14 25 16 28 14 30 17 32 15 34 11 32ZM18 33 19 29 22 30 22 26 25 28 24 33 20 35Z" fill="#1583dc" />
            </svg>
            <span class="narrow">Papelera de reciclaje</span></a></li>
          <li><a href="#">
            <svg width="48" height="48" viewBox="0 0 48 48" aria-hidden="true">${chromeMark}
              <rect x=".5" y="35.500" width="12" height="12" fill="#f4f4f4" stroke="#c2c2c2" />
              <path d="M3 46C2 41 4 39.500 6.500 39.500L4.500 37.500H11V44L9 42C6.500 42 5 43.500 6 46Z" fill="#24549c" />
            </svg>
            <span>Google Chrome</span></a></li>
        </ul>
        <control-panel-window .items=${entries}></control-panel-window>
      </main>
      <task-bar></task-bar>`;
  }
}
